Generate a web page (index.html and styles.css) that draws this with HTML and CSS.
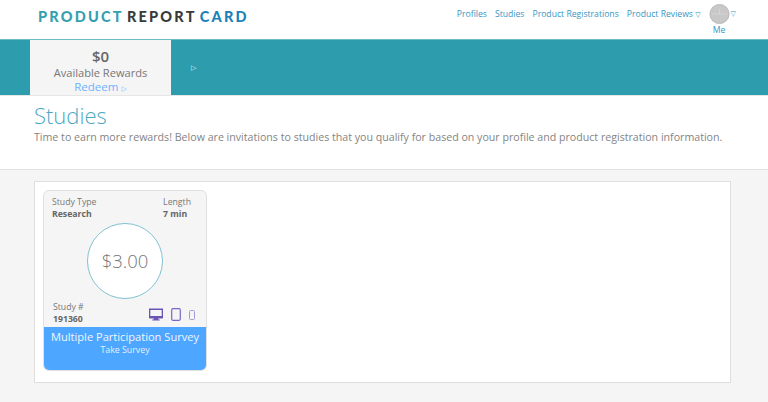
FILE: index.html
```html
<!DOCTYPE html>
<html lang="en">
<head>
  <meta charset="UTF-8">
  <title>Studies | Product Report Card</title>
  <link rel="stylesheet" href="styles.css">
</head>
<body>
  <header class="top-bar">
    <div class="logo"><span class="logo-teal">PRODUCT</span> <span class="logo-dark">REPORT</span> <span class="logo-blue">CARD</span></div>
    <nav class="main-nav">
      <a href="#">Profiles</a>
      <a href="#">Studies</a>
      <a href="#">Product Registrations</a>
      <a href="#">Product Reviews <span class="arrow">&#9661;</span></a>
      <div class="me-menu">
        <div class="me-row">
          <svg class="avatar" viewBox="0 0 20 20">
            <circle cx="10" cy="10" r="9.6" fill="#c8c8c8" stroke="#a9a9a9" stroke-width="0.7"/>
            <path d="M2 10h16M10 5v5" stroke="#dedede" stroke-width="0.6" fill="none"/>
          </svg>
          <span class="arrow me-arrow">&#9661;</span>
        </div>
        <a href="#" class="me-label">Me</a>
      </div>
    </nav>
  </header>

  <!-- Rewards band -->
  <section class="rewards-band">
    <div class="rewards-tab">
      <div class="rewards-amount">$0</div>
      <div class="rewards-label">Available Rewards</div>
      <a href="#" class="redeem">Redeem <span class="arrow">&#9655;</span></a>
    </div>
    <span class="band-arrow">&#9655;</span>
  </section>

  <section class="intro">
    <h1>Studies</h1>
    <p>Time to earn more rewards! Below are invitations to studies that you qualify for based on your profile and product registration information.</p>
  </section>

  <main class="studies-area">
    <div class="studies-panel">
      <article class="study-card">
        <div class="card-meta">
          <div>
            <div>Study Type</div>
            <strong>Research</strong>
          </div>
          <div class="meta-length">
            <div>Length</div>
            <strong>7 min</strong>
          </div>
        </div>
        <div class="payout">$3.00</div>
        <div class="card-foot">
          <div>
            <div>Study #</div>
            <strong>191360</strong>
          </div>
          <div class="devices">
            <svg width="14" height="13" viewBox="0 0 15 13" preserveAspectRatio="none">
              <path d="M0.7 1.2h13.6v8.3H0.7z" fill="#f5f5f5" stroke="#6a55b5" stroke-width="1.4"/>
              <path d="M0 8h15v2.2H0zM5 10.2h5v1.5H5zM3.5 11.4h8v1.2h-8z" fill="#6a55b5"/>
            </svg>
            <svg width="10" height="13" viewBox="0 0 10 13">
              <rect x="0.7" y="0.7" width="8.6" height="11.6" rx="1.2" fill="#f5f5f5" stroke="#7a66c2" stroke-width="1.2"/>
            </svg>
            <svg width="6" height="10" viewBox="0 0 6 10">
              <rect x="0.5" y="0.5" width="5" height="9" rx="1" fill="#f5f5f5" stroke="#a899dc" stroke-width="1"/>
            </svg>
          </div>
        </div>
        <a href="#" class="card-action">
          <div class="action-title">Multiple Participation Survey</div>
          <div class="action-sub">Take Survey</div>
        </a>
      </article>
    </div>
  </main>
</body>
</html>
```

FILE: styles.css
```css
* {
  box-sizing: border-box;
}

html, body {
  height: 100%;
}

body {
  font-family: 'Open Sans', 'Liberation Sans', sans-serif;
  background-color: #f5f5f5;
  color: #666;
  margin: 0;
  display: flex;
  flex-direction: column;
  overflow: hidden;
}

a {
  color: #3a95c2;
  text-decoration: none;
}

.arrow {
  font-family: 'DejaVu Sans', sans-serif;
  font-size: 7px;
}

/* Top bar */
.top-bar {
  height: 39px;
  background: white;
  display: flex;
  justify-content: space-between;
  padding: 0 32px 0 38px;
}

.logo {
  font-family: Lato, 'Liberation Sans', sans-serif;
  font-weight: 900;
  font-size: 14.5px;
  letter-spacing: 2.2px;
  line-height: 16px;
  margin-top: 9px;
  word-spacing: -2px;
}

.logo-teal {
  color: #35a0b0;
}

.logo-dark {
  color: #3a3a3c;
}

.logo-blue {
  color: #1a82b8;
}

.main-nav {
  display: flex;
  align-items: flex-start;
  gap: 8px;
  font-size: 8.65px;
  line-height: 14px;
}

.main-nav > a {
  margin-top: 7px;
}

.me-menu {
  margin-top: 4px;
}

.me-row {
  display: flex;
  align-items: center;
  gap: 1px;
}

.avatar {
  width: 21px;
  height: 20px;
  display: block;
}

.me-arrow {
  color: #3a95c2;
  margin-top: -1px;
}

.me-label {
  display: block;
  width: 21px;
  text-align: center;
  line-height: 12px;
}

/* Rewards band */
.rewards-band {
  height: 56px;
  background-color: #2d9cac;
  border-top: 1px solid #6fbcc7;
  padding-left: 30px;
  display: flex;
  align-items: center;
}

.rewards-tab {
  width: 141px;
  height: 55px;
  background-color: #f5f5f5;
  text-align: center;
  padding-top: 8px;
}

.rewards-amount {
  font-size: 15px;
  font-weight: 600;
  line-height: 17px;
  color: #666;
}

.rewards-label {
  font-size: 11.1px;
  line-height: 15px;
  color: #777;
}

.redeem {
  display: block;
  font-size: 11.5px;
  line-height: 14px;
  color: #6db3ff;
}

.band-arrow {
  font-family: 'DejaVu Sans', sans-serif;
  font-size: 7px;
  color: #e3f4f7;
  margin-left: 20px;
  margin-top: 1px;
}

/* Intro */
.intro {
  height: 76px;
  background: white;
  border-top: 1px solid #e6e6e6;
  border-bottom: 1px solid #e2e2e2;
  padding: 5px 34px 0;
}

.intro h1 {
  margin: 0;
  font-size: 22px;
  font-weight: 300;
  line-height: 29px;
  color: #4fa9c2;
}

.intro p {
  margin: 0;
  font-size: 10.64px;
  line-height: 14px;
  color: #848484;
}

/* Study list */
.studies-area {
  flex: 1;
  padding: 11px 37px 19px 34px;
}

.studies-panel {
  height: 202px;
  background: white;
  border: 1px solid #dedede;
  padding: 8px;
}

.study-card {
  width: 164px;
  height: 181px;
  background-color: #f5f5f5;
  border: 1px solid #e0e0e0;
  border-radius: 6px;
  font-size: 8.7px;
  line-height: 12px;
  color: #777;
  display: flex;
  flex-direction: column;
  overflow: hidden;
}

.study-card strong {
  font-weight: 700;
  color: #666;
}

.card-meta {
  display: flex;
  justify-content: space-between;
  padding: 5px 15px 0 8px;
}

.payout {
  width: 76px;
  height: 76px;
  margin: 3px auto 0;
  background: white;
  border: 1px solid #7fc0d0;
  border-radius: 50%;
  display: flex;
  align-items: center;
  justify-content: center;
  font-size: 18.5px;
  font-weight: 300;
  color: #777;
}

.card-foot {
  display: flex;
  justify-content: space-between;
  align-items: flex-end;
  padding: 0 11px 2px 9px;
  height: 28px;
  flex: none;
}

.devices {
  display: flex;
  align-items: center;
  gap: 8px;
  margin-bottom: 4px;
}

.card-action {
  display: block;
  flex: 1;
  background-color: #4da6ff;
  color: white;
  text-align: center;
  padding-top: 2px;
}

.action-title {
  font-size: 11.1px;
  line-height: 15px;
  color: #eef6ff;
}

.action-sub {
  font-size: 8.8px;
  line-height: 12px;
  color: #e3f0ff;
}
```
